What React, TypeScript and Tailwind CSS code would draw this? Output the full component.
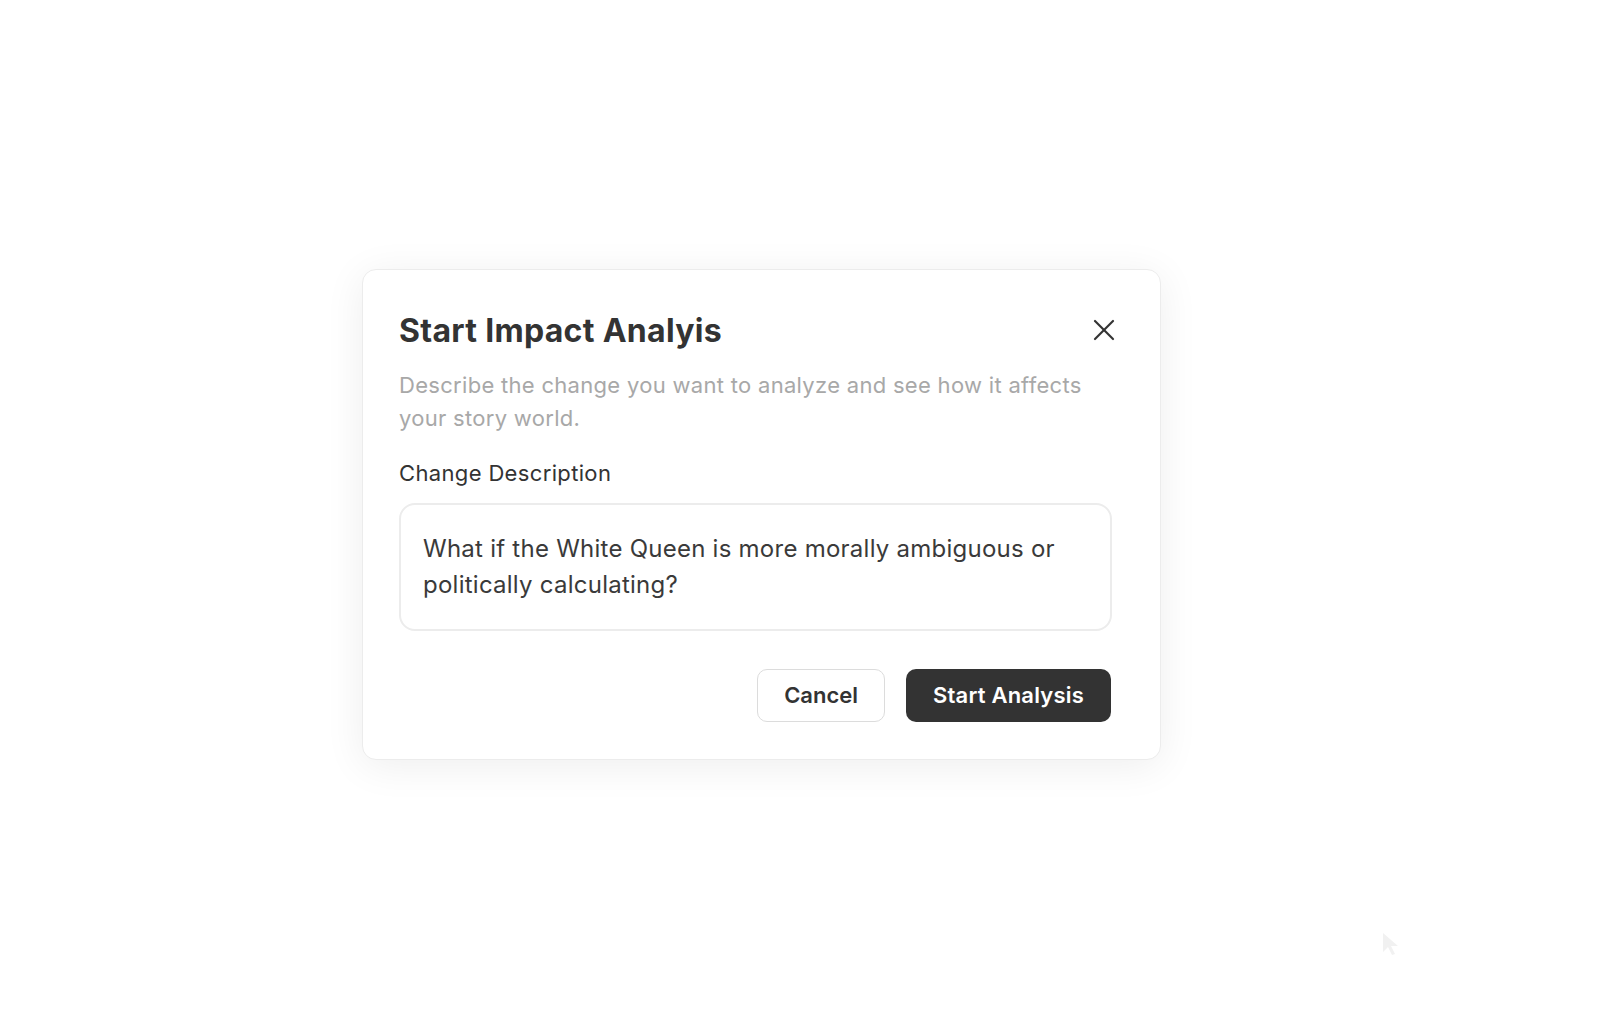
import { useState } from 'react';

export default function App() {
  const [text, setText] = useState(
    'What if the White Queen is more morally ambiguous or politically calculating?'
  );

  return (
    <div
      className="relative min-h-[1016px] w-full bg-white pl-[362px] pt-[269px]"
      style={{ fontFamily: 'Inter, "Noto Sans", sans-serif' }}
    >
      {/* Dialog */}
      <div className="w-[799px] rounded-[14px] border border-[#ececec] bg-white pb-[37px] pl-9 pr-12 pt-[43px] shadow-[0_6px_40px_rgba(0,0,0,0.07)]">
        <div className="flex items-center justify-between">
          <h2 className="text-[32px] font-bold leading-[36px] tracking-[0.3px] text-[#333]">
            Start Impact Analyis
          </h2>
          <button className="-mr-[4px] -mt-[2px] flex h-6 w-6 items-center justify-center text-[#333]" aria-label="Close">
            <svg width="22" height="22" viewBox="0 0 22 22" fill="none" stroke="currentColor" strokeWidth="2.2" strokeLinecap="round">
              <path d="M2 2 L20 20" />
              <path d="M20 2 L2 20" />
            </svg>
          </button>
        </div>

        <p className="mt-[20px] text-[22px] leading-[33px] tracking-[0.3px] text-[#a8a8a8]">
          Describe the change you want to analyze and see how it affects your story world.
        </p>

        <label className="mt-[22px] block text-[22px] leading-[33px] tracking-[0.35px] text-[#333]">
          Change Description
        </label>

        <textarea
          value={text}
          onChange={(e) => setText(e.target.value)}
          rows={2}
          className="mt-[13px] block h-[128px] w-full resize-none rounded-2xl border-2 border-[#ececec] px-[22px] pb-[25px] pt-[26px] text-[24px] leading-[36px] tracking-[0.25px] text-[#3a3a3a] outline-none"
        />

        <div className="mt-[38px] flex justify-end gap-[21px] pr-[1px]">
          <button className="h-[53px] rounded-[10px] border border-[#dcdcdc] bg-white px-[26px] text-[22px] font-semibold text-[#333]">
            Cancel
          </button>
          <button className="h-[53px] rounded-[10px] bg-[#333] px-[27px] text-[22px] font-semibold tracking-[0.2px] text-white">
            Start Analysis
          </button>
        </div>
      </div>

      {/* faint cursor */}
      <svg className="absolute left-[1382px] top-[932px]" width="18" height="24" viewBox="0 0 18 24">
        <path d="M1 1 L1 20 L6 15 L10 23 L13 22 L9 14 L16 14 Z" fill="#f1f1f1" />
      </svg>
    </div>
  );
}
